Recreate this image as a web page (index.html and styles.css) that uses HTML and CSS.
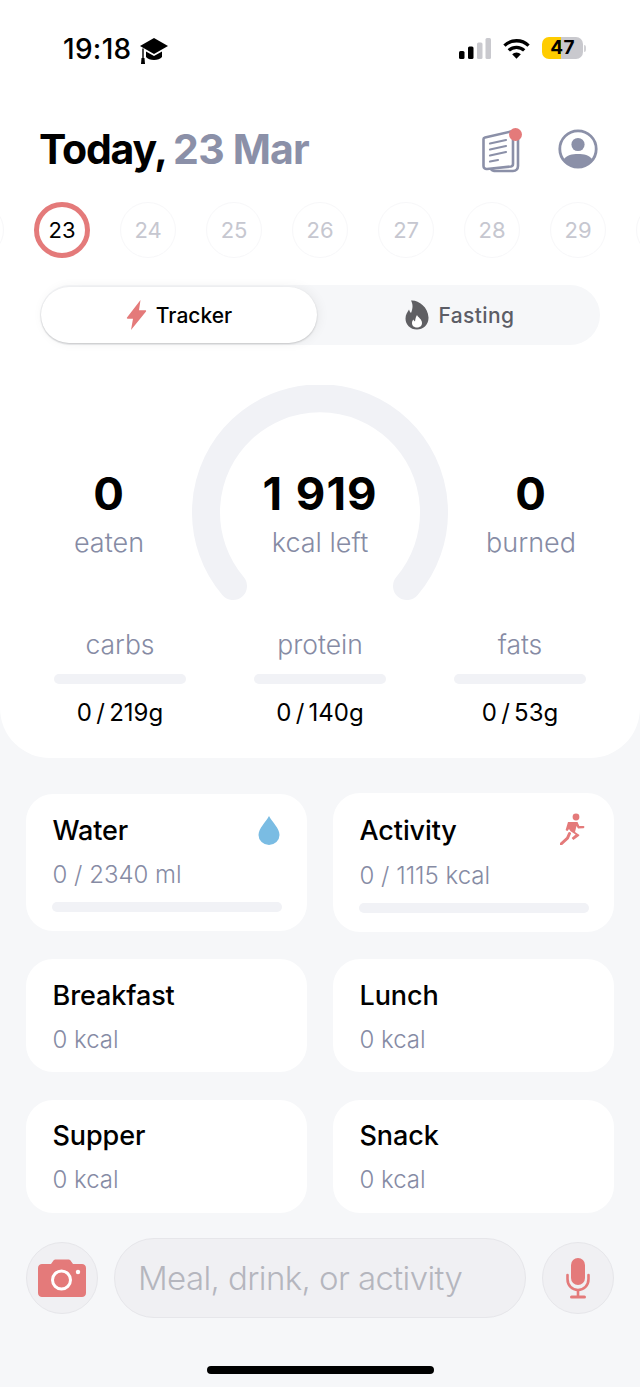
FILE: index.html
```html
<!DOCTYPE html>
<html lang="en">
<head>
<meta charset="utf-8">
<title>Today</title>
<link rel="stylesheet" href="styles.css">
</head>
<body>
<div class="page">
  <section class="sheet">
    <div class="status">
      <div class="status-left">
        <span class="clock">19:18</span>
        <svg class="cap" viewBox="0 0 30 28"><path d="M15 1 1 9l14 8 14-8z" fill="#000"/><path d="M7 14.500V20c3 4 13 4 16 0v-5.500l-8 4.500z" fill="#000"/><path d="M4 11.500V21" stroke="#000" stroke-width="1.400" fill="none"/><path d="M2.500 21h3l.5 6h-4z" fill="#000"/></svg>
      </div>
      <div class="status-right">
        <svg class="signal" viewBox="0 0 32 21"><rect x="0" y="13" width="5.500" height="8" rx="1.500" fill="#000"/><rect x="9" y="8.500" width="5.500" height="12.500" rx="1.500" fill="#000"/><rect x="18" y="4.500" width="5.500" height="16.500" rx="1.500" fill="#c9c9ce"/><rect x="26.500" y="0" width="5.500" height="21" rx="1.500" fill="#c9c9ce"/></svg>
        <svg class="wifi" viewBox="0 0 28 21"><path d="M1.500 7.500a18 18 0 0 1 25 0" stroke="#000" stroke-width="3.400" fill="none"/><path d="M6 12.500a11.500 11.500 0 0 1 16 0" stroke="#000" stroke-width="3.400" fill="none"/><path d="M14 21 9.500 16.500a6.500 6.500 0 0 1 9 0z" fill="#000"/></svg>
        <div class="battery"><span class="battery-num">47</span></div>
        <span class="battery-tip"></span>
      </div>
    </div>

    <header class="title-row">
      <h1 class="title">Today, <span class="title-date">23 Mar</span></h1>
      <div class="title-icons">
        <div class="doc-wrap">
          <svg class="doc" viewBox="0 0 38 44"><path d="M33 5.500 36 6.500V37c0 3-2 5-5 5H14c-2 0-4-.5-5-2" fill="none" stroke="#8b90a8" stroke-width="2.600" stroke-linecap="round"/><path d="M3 8.500 29 2.500c1-.2 2 .5 2 1.500v31c0 1.500-.7 2.300-2 2.500L5 40c-2 .2-3.500-1-3.500-3V10c0-.8.600-1.300 1.500-1.500z" fill="#fff" stroke="#8b90a8" stroke-width="2.600"/><path d="M8 14.500 24 11M8 20.500 24 17M8 26.500 24 23M8 32.500 16 31" stroke="#8b90a8" stroke-width="2.200" stroke-linecap="round"/></svg>
          <span class="doc-dot"></span>
        </div>
        <svg class="user" viewBox="0 0 40 40"><circle cx="20" cy="20" r="18.200" fill="#fff" stroke="#8b90a8" stroke-width="2.800"/><circle cx="20" cy="15.500" r="6.600" fill="#8b90a8"/><path d="M5.500 30.500C9 26 14 25 20 25s11 1 14.500 5.500A18 18 0 0 1 20 38 18 18 0 0 1 5.500 30.500z" fill="#8b90a8"/></svg>
      </div>
    </header>

    <div class="dates">
      <span class="date"></span>
      <span class="date date-on">23</span>
      <span class="date">24</span>
      <span class="date">25</span>
      <span class="date">26</span>
      <span class="date">27</span>
      <span class="date">28</span>
      <span class="date">29</span>
      <span class="date"></span>
    </div>

    <div class="tabs">
      <div class="tab tab-on">
        <svg class="bolt" viewBox="0 0 21 30"><path d="M14.500 0 1 17.500c-.4.600 0 1.200.6 1.200H7L5 30 20 11.500c.4-.6 0-1.200-.6-1.200H13z" fill="#e47a7a"/></svg>
        <span>Tracker</span>
      </div>
      <div class="tab tab-off">
        <svg class="flame" viewBox="0 0 24 30"><path d="M6 .5c7-.8 17 6 17.500 17C23.800 25 18 29.500 12 29.500 5 29.500.500 24.500.500 18.500c0-4 2-6.500 3.500-9 .5 1.500 1 2.500 2 3.500C7.500 9 8.500 5 6 .5z" fill="#5f5f63"/><path d="M12 15c1 2.500 5 4 5 8 0 3-2.300 4.500-5 4.500S7 26 7 23c0-1.500.6-2.800 1.500-3.500.4 1 .8 1.500 1.500 2 .3-2.500.8-4.500 2-6.500z" fill="#fff"/></svg>
        <span>Fasting</span>
      </div>
    </div>

    <div class="gauge-row">
      <svg class="gauge" viewBox="0 0 256 224"><path d="M41 201A114 114 0 1 1 215 201" fill="none" stroke="#f1f2f6" stroke-width="28" stroke-linecap="round"/></svg>
      <div class="stat"><strong class="stat-num">0</strong><span class="stat-label">eaten</span></div>
      <div class="stat"><strong class="stat-num">1 919</strong><span class="stat-label">kcal left</span></div>
      <div class="stat"><strong class="stat-num">0</strong><span class="stat-label">burned</span></div>
    </div>

    <div class="macros">
      <div class="macro"><span class="macro-label">carbs</span><span class="track"></span><span class="macro-val">0 / 219g</span></div>
      <div class="macro"><span class="macro-label">protein</span><span class="track"></span><span class="macro-val">0 / 140g</span></div>
      <div class="macro"><span class="macro-label">fats</span><span class="track"></span><span class="macro-val">0 / 53g</span></div>
    </div>
  </section>

  <section class="cards">
    <div class="card card-tall">
      <div class="card-head"><span class="card-title">Water</span>
        <svg class="drop" viewBox="0 0 22 30"><path d="M11 1C8 7 .5 13 .5 20a10.500 10 0 0 0 21 0C21.500 13 14 7 11 1z" fill="#7abce3"/></svg>
      </div>
      <div class="card-sub">0 / 2340 ml</div>
      <div class="card-track"></div>
    </div>
    <div class="card card-tall card-act">
      <div class="card-head"><span class="card-title">Activity</span>
        <svg class="run" viewBox="0 0 26 32"><circle cx="16" cy="4" r="3.400" fill="#e47a7a"/><path d="M8 9h9.500l1.800 4 4.200 0c1.200 0 1.200 2 0 2.200l-5.500.3-1.500-2.500-1.500 6 4.500 3-.6 1-5.500 4-1.800-2 4-3.500-5-3.200L9 16 7.500 18c-1 0-1.800-.5-1.800-1.200z" fill="#e47a7a"/><path d="M9.500 20.500 7.500 25 1 31" stroke="#e47a7a" stroke-width="3" fill="none" stroke-linecap="round"/></svg>
      </div>
      <div class="card-sub">0 / 1115 kcal</div>
      <div class="card-track"></div>
    </div>
    <div class="card"><div class="card-head"><span class="card-title">Breakfast</span></div><div class="card-sub">0 kcal</div></div>
    <div class="card"><div class="card-head"><span class="card-title">Lunch</span></div><div class="card-sub">0 kcal</div></div>
    <div class="card card-low"><div class="card-head"><span class="card-title">Supper</span></div><div class="card-sub">0 kcal</div></div>
    <div class="card card-low"><div class="card-head"><span class="card-title">Snack</span></div><div class="card-sub">0 kcal</div></div>
  </section>

  <section class="composer">
    <div class="round-btn">
      <svg class="camera" viewBox="0 0 48 38"><path d="M4 5h9l2.500-3.500C16 .8 17 .5 18 .5h12c1 0 2 .3 2.500 1L35 5h9c2 0 4 1.500 4 4v25c0 2.500-2 4-4 4H4c-2 0-4-1.500-4-4V9c0-2.500 2-4 4-4z" fill="#e47a7a"/><circle cx="23.500" cy="21" r="9" fill="none" stroke="#fff" stroke-width="3"/><circle cx="40" cy="13" r="2.200" fill="#fff"/></svg>
    </div>
    <div class="input">Meal, drink, or activity</div>
    <div class="round-btn">
      <svg class="mic" viewBox="0 0 24 41"><rect x="5" y="0" width="14" height="27" rx="7" fill="#e47a7a"/><path d="M1.500 17v4c0 6.500 4.500 11 10.500 11s10.500-4.500 10.500-11v-4" fill="none" stroke="#e47a7a" stroke-width="2.600" stroke-linecap="round"/><path d="M12 32v6" stroke="#e47a7a" stroke-width="2.600"/><rect x="4" y="37.500" width="16" height="3" rx="1.500" fill="#e47a7a"/></svg>
    </div>
  </section>

  <div class="home-wrap"><span class="home"></span></div>
</div>
</body>
</html>
```
FILE: styles.css
```css
* { box-sizing: border-box; }
html, body { margin: 0; padding: 0; }
body {
  width: 640px;
  height: 1387px;
  overflow: hidden;
  background: #f6f7f9;
  font-family: Inter, "Noto Sans", "Liberation Sans", sans-serif;
  color: #000;
}
.page { display: flex; flex-direction: column; height: 1387px; }

.sheet {
  height: 758px;
  background: #fff;
  border-radius: 0 0 50px 50px;
  display: flex;
  flex-direction: column;
}

.status {
  height: 69px;
  padding: 33px 54px 0 63px;
  display: flex;
  justify-content: space-between;
  align-items: flex-start;
}
.status-left { display: flex; align-items: center; gap: 7px; }
.clock { font-size: 28px; font-weight: 500; line-height: 30px; letter-spacing: 0.3px; }
.cap { width: 30px; height: 28px; margin-top: 4px; }
.status-right { display: flex; align-items: center; height: 26px; margin-top: 2px; }
.signal { width: 32px; height: 21px; margin-right: 12px; }
.wifi { width: 27px; height: 21px; margin-right: 12px; }
.battery {
  width: 41px;
  height: 22px;
  border-radius: 7px;
  background: linear-gradient(90deg, #ffcc00 0 47%, #c9c9ce 47% 100%);
  display: flex;
  align-items: center;
  justify-content: center;
}
.battery-num { font-size: 19px; font-weight: 700; line-height: 22px; letter-spacing: 0.2px; }
.battery-tip { width: 2px; height: 7px; margin-left: 1px; background: #d2d2d6; border-radius: 0 2px 2px 0; }

.title-row {
  height: 134px;
  padding: 56px 42px 0 40px;
  display: flex;
  justify-content: space-between;
  align-items: flex-start;
}
.title { margin: 0 0 0 -1px; font-size: 41px; line-height: 48px; font-weight: 700; letter-spacing: -1.2px; word-spacing: -1px; white-space: nowrap; }
.title-date { color: #8b90a8; letter-spacing: -0.8px; word-spacing: 0; }
.title-icons { display: flex; align-items: flex-start; gap: 38px; margin-top: 3px; }
.doc-wrap { position: relative; width: 38px; height: 44px; margin-top: 1px; }
.doc { width: 38px; height: 44px; display: block; }
.doc-dot {
  position: absolute;
  top: -1px;
  right: -2px;
  width: 13px;
  height: 13px;
  border-radius: 50%;
  background: #e47a7a;
}
.user { width: 40px; height: 40px; margin-top: 1px; }

.dates {
  height: 56px;
  margin-top: -1px;
  display: flex;
  justify-content: center;
  gap: 30px;
  overflow: hidden;
  flex: none;
}
.date {
  flex: none;
  width: 56px;
  height: 56px;
  border-radius: 50%;
  border: 1px solid #f7f7f9;
  display: flex;
  align-items: center;
  justify-content: center;
  font-size: 22px;
  color: #c6c7d0;
  letter-spacing: -0.1px;
}
.date-on { border: 5px solid #e47a7a; color: #000; }

.tabs {
  margin: 27px 40px 0;
  height: 60px;
  border-radius: 30px;
  background: #f6f7f9;
  display: flex;
  padding: 2px 0 2px 1px;
  flex: none;
}
.tab {
  flex: 1;
  display: flex;
  align-items: center;
  justify-content: center;
  gap: 9px;
  font-size: 21px;
  font-weight: 500;
  color: #5c5d66;
}
.tab-off { padding-left: 3px; letter-spacing: 0.4px; }
.tab-on {
  flex: none;
  width: 276px;
  background: #fff;
  color: #000;
  border-radius: 28px;
  box-shadow: 0 1px 2px rgba(0,0,0,.18), 2px 0 12px rgba(0,0,0,.06);
}
.bolt { width: 21px; height: 30px; }
.flame { width: 24px; height: 30px; }

.gauge-row {
  position: relative;
  height: 229px;
  margin-top: 40px;
  padding-top: 86px;
  display: grid;
  grid-template-columns: 218px 204px 218px;
  flex: none;
}
.gauge { position: absolute; left: 192px; top: 0; width: 256px; height: 224px; }
.stat { position: relative; display: flex; flex-direction: column; align-items: center; }
.stat-num { font-size: 45.500px; line-height: 46px; font-weight: 700; letter-spacing: 1px; word-spacing: 1px; white-space: pre; }
.stat-label { font-size: 27px; line-height: 36px; margin-top: 8px; color: #868ba4; font-weight: 300; }

.macros {
  padding: 15px 54px 0;
  display: flex;
  justify-content: space-between;
  flex: none;
}
.macro { width: 132px; display: flex; flex-direction: column; align-items: center; }
.macro-label { font-size: 26.500px; line-height: 30px; color: #868ba4; font-weight: 300; }
.track { width: 100%; height: 10px; margin-top: 15px; border-radius: 5px; background: #f1f2f6; }
.macro-val { font-size: 24px; line-height: 28px; margin-top: 15px; word-spacing: -2.500px; }

.cards {
  padding: 36px 26px 0;
  display: grid;
  grid-template-columns: 281px 281px;
  gap: 28px 26px;
  grid-template-rows: 137px 113px 113px;
  flex: none;
}
.card { background: #fff; border-radius: 27px; padding: 20px 27px 0 27px; }
.card-act { margin-top: -1px; margin-bottom: -1px; padding-top: 21px; }
.card-low { padding-top: 19px; }
.card-head { display: flex; justify-content: space-between; align-items: flex-start; height: 34px; margin-left: -0.5px; }
.card-title { font-size: 27px; line-height: 34px; font-weight: 500; letter-spacing: -0.1px; }
.card-sub { margin-top: 12px; margin-left: -0.5px; font-size: 24px; line-height: 30px; color: #868ba4; font-weight: 300; }
.card-track { height: 10px; margin-top: 12px; margin-left: -1px; width: 230px; border-radius: 5px; background: #f1f2f6; }
.card-act .card-sub { margin-top: 13px; }
.drop { width: 22px; height: 30px; margin-top: 1px; }
.run { width: 26px; height: 32px; margin-right: 1px; margin-top: -1px; }

.composer {
  margin-top: 25px;
  padding: 0 26px;
  display: flex;
  align-items: center;
  gap: 16px;
  height: 80px;
  flex: none;
}
.round-btn {
  width: 72px;
  height: 72px;
  flex: none;
  border-radius: 50%;
  background: #f0f0f3;
  border: 1.5px solid #e6e6ea;
  display: flex;
  align-items: center;
  justify-content: center;
}
.camera { width: 48px; height: 38px; }
.mic { width: 24px; height: 41px; }
.input {
  flex: 1;
  height: 80px;
  border-radius: 40px;
  background: #f0f0f3;
  border: 1.5px solid #e6e6ea;
  display: flex;
  align-items: center;
  padding-left: 23px;
  font-size: 33px;
  font-weight: 300;
  color: #b5b6be;
  letter-spacing: -0.6px;
}
.home-wrap { flex: none; margin-top: 48px; display: flex; justify-content: center; }
.home { width: 227px; height: 8px; border-radius: 4px; background: #000; }
```
